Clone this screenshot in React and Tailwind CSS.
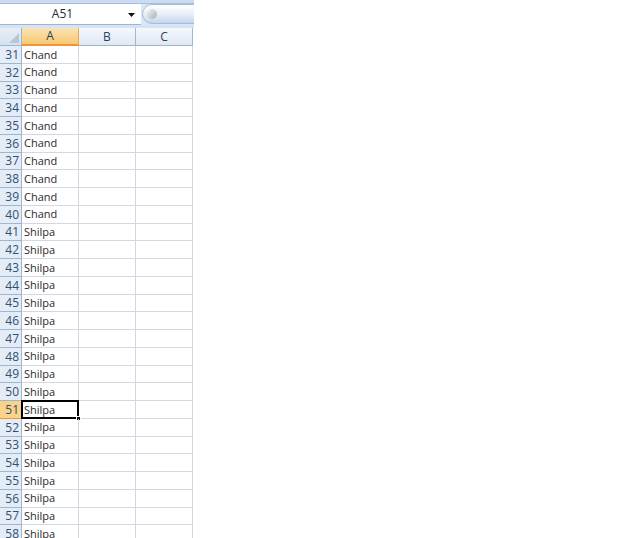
import React from "react";

const rows = Array.from({ length: 28 }, (_, i) => 31 + i);

export default function App() {
  return (
    <div className="w-[640px] h-[538px] overflow-hidden bg-white flex" style={{ fontFamily: '"Open Sans", "Liberation Sans", Arial, sans-serif' }}>
      <div className="w-[194px] flex flex-col shrink-0 overflow-hidden">
        {/* top bar */}
        <div className="h-[3px] bg-[#c9dcf2]" />
        <div className="h-[1px] bg-[#a9bfd9]" />
        <div className="h-[21px] flex bg-[#dbe7f6]">
          <div className="w-[141px] bg-white flex items-center border-b border-[#9fb4cf] relative">
            <span className="w-[125px] text-center text-[12px] text-[#1e2c3e]">A51</span>
            <svg width="7" height="4" viewBox="0 0 7 4" className="absolute left-[128px] top-[9px]">
              <path d="M0 0 H7 L3.5 4 Z" fill="#111" />
            </svg>
          </div>
          <div className="flex-1 relative overflow-hidden">
            <div className="absolute left-[1px] top-[0px] w-[80px] h-[20px] rounded-l-full border border-[#a7bcd6] bg-gradient-to-b from-[#ffffff] via-[#e8eff9] to-[#c6d6ec]">
              <div className="absolute left-[4px] top-[4px] w-[10px] h-[10px] rounded-full bg-gradient-to-br from-[#f4f4f4] to-[#a9b0b9]" />
            </div>
          </div>
        </div>
        <div className="h-[3px] bg-[#d6e3f4]" />
        {/* header row */}
        <div className="h-[18px] flex shrink-0">
          <div className="w-[22px] bg-gradient-to-b from-[#e9eef6] to-[#d6e1ef] border-r border-b border-[#9eb6ce] relative">
            <svg width="10" height="10" viewBox="0 0 10 10" className="absolute right-[2px] bottom-[2px]">
              <path d="M10 0 V10 H0 Z" fill="#b6c7dc" />
            </svg>
          </div>
          <div className="w-[57px] bg-gradient-to-b from-[#fbe2b4] to-[#f7c96f] border-r border-b-2 border-[#f29436] border-r-[#f0a84a] flex items-center justify-center text-[12px] text-[#27415f]">A</div>
          <div className="w-[57px] bg-gradient-to-b from-[#f5f8fc] to-[#e0e8f2] border-r border-b border-[#9eb6ce] flex items-center justify-center text-[12px] text-[#27415f]">B</div>
          <div className="w-[57px] bg-gradient-to-b from-[#f5f8fc] to-[#e0e8f2] border-r border-b border-[#9eb6ce] flex items-center justify-center text-[12px] text-[#27415f]">C</div>
        </div>
        {/* rows */}
        <div className="flex-1 overflow-hidden">
          {rows.map((n) => {
            const sel = n === 51;
            return (
              <div key={n} className="h-[17.75px] flex">
                <div className={`w-[22px] border-r border-b flex items-center justify-end pr-[2px] pt-[1px] text-[12px] text-[#33506e] ${sel ? "bg-[#f9d38b] border-[#f29436]" : "bg-[#e4ecf7] border-[#9eb6ce]"}`}>{n}</div>
                <div className="w-[57px] border-r border-b border-[#d0d7e5] flex items-center pl-[2px] pt-[1px] text-[11px] text-[#2a2a2a] relative">
                  {n <= 40 ? "Chand" : "Shilpa"}
                  {sel && (
                    <>
                      <div className="absolute left-[-1px] top-[-1px] right-[-1px] bottom-[-1px] border-2 border-black pointer-events-none" />
                      <div className="absolute right-[-3px] bottom-[-3px] w-[5px] h-[5px] bg-black border border-white" />
                    </>
                  )}
                </div>
                <div className="w-[57px] border-r border-b border-[#d0d7e5]" />
                <div className="w-[57px] border-r border-b border-[#d0d7e5]" />
              </div>
            );
          })}
        </div>
      </div>
      <div className="flex-1 bg-white" />
    </div>
  );
}
